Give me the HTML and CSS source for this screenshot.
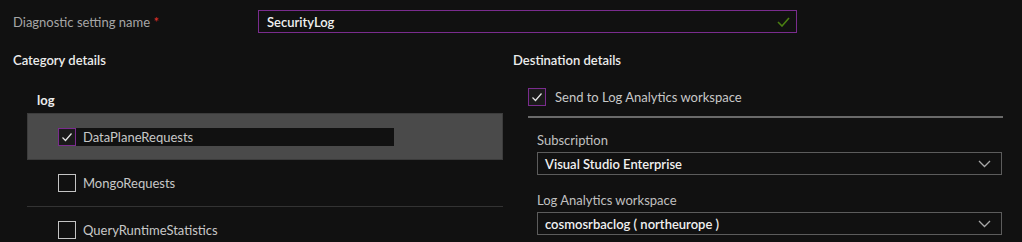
FILE: index.html
```html
<!DOCTYPE html>
<html lang="en">
<head>
  <meta charset="UTF-8">
  <title>Diagnostic setting</title>
  <link rel="stylesheet" href="styles.css">
</head>
<body>
  <!-- Setting name -->
  <div class="name-row">
    <label class="name-label">Diagnostic setting name <span class="required">*</span></label>
    <div class="text-input">
      <span class="input-value">SecurityLog</span>
      <svg class="valid-icon" width="13" height="10" viewBox="0 0 13 10">
        <path d="M1 5l4 4 7-8" stroke="#4a7f12" stroke-width="1.6" fill="none"/>
      </svg>
    </div>
  </div>

  <div class="columns">

    <!-- Category details -->
    <div class="category">
      <div class="section-title">Category details</div>
      <div class="group-title">log</div>
      <div class="category-list">
        <div class="category-item selected">
          <span class="checkbox checked">
            <svg viewBox="0 0 16 16" width="16" height="16"><path d="M3.5 8.5l3 3 6-7" stroke="#e6e6e6" stroke-width="1.2" fill="none"/></svg>
          </span>
          <span class="item-label focused">DataPlaneRequests</span>
        </div>
        <div class="category-item">
          <span class="checkbox"></span>
          <span class="item-label">MongoRequests</span>
        </div>
        <div class="category-item">
          <span class="checkbox"></span>
          <span class="item-label">QueryRuntimeStatistics</span>
        </div>
      </div>
    </div>

    <!-- Destination details -->
    <div class="destination">
      <div class="section-title">Destination details</div>
      <div class="destination-option">
        <span class="checkbox checked">
          <svg viewBox="0 0 16 16" width="16" height="16"><path d="M3.5 8.5l3 3 6-7" stroke="#e6e6e6" stroke-width="1.2" fill="none"/></svg>
        </span>
        <span class="option-label">Send to Log Analytics workspace</span>
      </div>
      <div class="destination-fields">
        <div class="field-label">Subscription</div>
        <div class="dropdown">
          <span>Visual Studio Enterprise</span>
          <svg width="13" height="8" viewBox="0 0 13 8"><path d="M1 1l5.5 5.5L12 1" stroke="#a8a8a8" stroke-width="1.3" fill="none"/></svg>
        </div>
        <div class="field-label second">Log Analytics workspace</div>
        <div class="dropdown">
          <span>cosmosrbaclog ( northeurope )</span>
          <svg width="13" height="8" viewBox="0 0 13 8"><path d="M1 1l5.5 5.5L12 1" stroke="#a8a8a8" stroke-width="1.3" fill="none"/></svg>
        </div>
      </div>
    </div>

  </div>
</body>
</html>
```

FILE: styles.css
```css
body {
  margin: 0;
  background: #111111;
  color: #d6d6d6;
  font-family: Lato, "Noto Sans", sans-serif;
  font-size: 13px;
  overflow: hidden;
}

/* Name row at the top */
.name-row {
  display: flex;
  align-items: center;
  padding: 10px 0 0 13px;
}
.name-label {
  width: 245px;
  color: #a6a6a6;
}
.required {
  color: #e0302a;
}
.text-input {
  box-sizing: border-box;
  width: 539px;
  height: 23px;
  border: 1px solid #7a2c8e;
  display: flex;
  align-items: center;
  justify-content: space-between;
  padding: 0 6px 0 8px;
}
.input-value {
  color: #f0f0f0;
  font-weight: 600;
}

/* Two columns */
.columns {
  display: grid;
  grid-template-columns: 513px 489px;
  margin-top: 17px;
}

.section-title {
  height: 20px;
  line-height: 20px;
  color: #ececec;
  font-weight: 600;
}

/* Category list */
.category {
  padding-left: 13px;
}
.group-title {
  margin: 20px 0 0 24px;
  height: 20px;
  line-height: 20px;
  font-weight: 700;
  color: #ececec;
}
.category-list {
  margin: 3px 0 0 14px;
  width: 476px;
}
.category-item {
  display: flex;
  align-items: center;
  height: 46px;
  padding-left: 31px;
  border-bottom: 1px solid #333333;
}
.category-item.selected {
  box-sizing: border-box;
  height: 47px;
  background: #4a4a4a;
  border: 1px solid #3c3c3c;
  padding-left: 30px;
}
.checkbox {
  box-sizing: border-box;
  width: 18px;
  height: 18px;
  border: 1px solid #c4c4c4;
  display: flex;
  align-items: center;
  justify-content: center;
  flex: none;
}
.checkbox.checked {
  border-color: #7a2c8e;
  background: #1a1a1a;
}
.item-label {
  padding-left: 7px;
  color: #c8c8c8;
}
.item-label.focused {
  background: #111111;
  width: 311px;
  height: 18px;
  line-height: 18px;
  padding-left: 7px;
}

/* Destination column */
.destination-option {
  display: flex;
  align-items: center;
  margin: 18px 0 0 15px;
  padding-bottom: 10px;
  border-bottom: 2px solid #6a6a6a;
  width: 475px;
}
.option-label {
  padding-left: 9px;
  color: #c8c8c8;
}
.destination-fields {
  padding-left: 24px;
}
.field-label {
  margin-top: 13px;
  height: 18px;
  line-height: 18px;
  color: #c0c0c0;
}
.field-label.second {
  margin-top: 16px;
}
.dropdown {
  box-sizing: border-box;
  margin-top: 3px;
  width: 465px;
  height: 23px;
  border: 1px solid #5c5c5c;
  display: flex;
  align-items: center;
  justify-content: space-between;
  padding: 0 10px 0 7px;
  color: #f0f0f0;
  font-weight: 600;
}
```
